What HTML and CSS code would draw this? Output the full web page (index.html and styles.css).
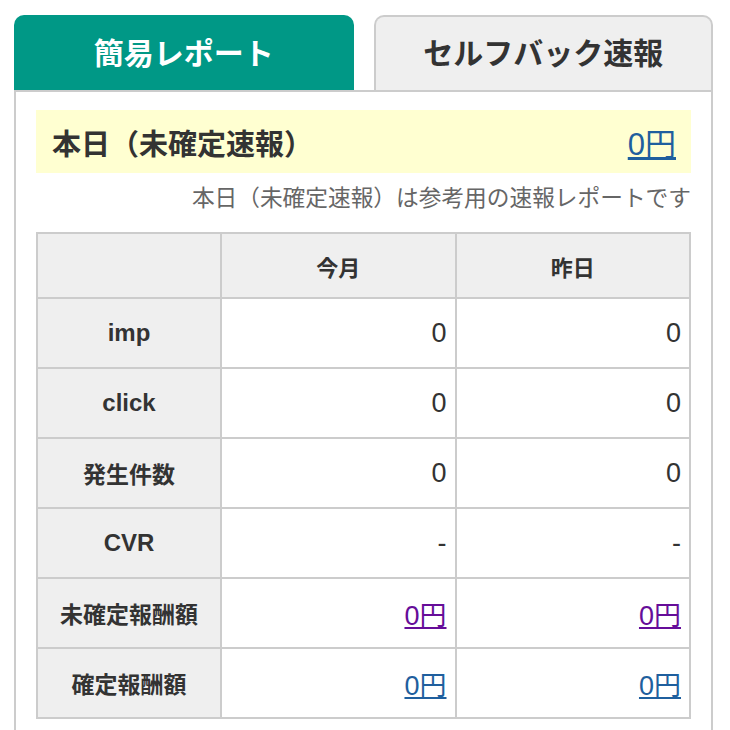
FILE: index.html
```html
<!DOCTYPE html>
<html lang="ja">
    <head>
        <meta charset="UTF-8">
        <meta name="viewport" content="width=device-width, initial-scale=1">
        <title> 簡易レポート </title>
        <link rel="stylesheet" href="styles.css">
    </head>
    <body>
        <div class="wrap">
            <div class="tabs">
                <a class="tab active" href="#">簡易レポート</a>
                <a class="tab" href="#">セルフバック速報</a>
            </div>
            <div class="panel">
                <div class="today">
                    <span class="today-label">本日（未確定速報）</span>
                    <a class="today-amount" href="#">0円</a>
                </div>
                <p class="note">本日（未確定速報）は参考用の速報レポートです</p>
                <table class="report">
                    <colgroup>
                        <col class="c-head">
                        <col class="c-val">
                        <col class="c-val">
                    </colgroup>
                    <thead>
                        <tr>
                            <th></th>
                            <th>今月</th>
                            <th>昨日</th>
                        </tr>
                    </thead>
                    <tbody>
                        <tr>
                            <th class="en">imp</th>
                            <td>0</td>
                            <td>0</td>
                        </tr>
                        <tr>
                            <th class="en">click</th>
                            <td>0</td>
                            <td>0</td>
                        </tr>
                        <tr>
                            <th>発生件数</th>
                            <td>0</td>
                            <td>0</td>
                        </tr>
                        <tr>
                            <th class="en">CVR</th>
                            <td>-</td>
                            <td>-</td>
                        </tr>
                        <tr>
                            <th>未確定報酬額</th>
                            <td><a class="visited" href="#">0円</a></td>
                            <td><a class="visited" href="#">0円</a></td>
                        </tr>
                        <tr>
                            <th>確定報酬額</th>
                            <td><a href="#">0円</a></td>
                            <td><a href="#">0円</a></td>
                        </tr>
                    </tbody>
                </table>
            </div>
        </div>
    </body>
</html>
```

FILE: styles.css
```css
body {
    margin: 0;
    background-color: #fff;
    color: #333;
    font-family: "Liberation Sans", "Noto Sans CJK JP", sans-serif;
}
a {
    color: #1f5f9e;
}
.wrap {
    margin: 15px 17px 0 14px;
}
.tabs {
    display: flex;
    gap: 20px;
}
.tab {
    flex: 1;
    height: 75px;
    display: flex;
    align-items: center;
    justify-content: center;
    border-radius: 10px 10px 0 0;
    font-family: "Noto Sans CJK JP", sans-serif;
    font-size: 30px;
    font-weight: bold;
    text-decoration: none;
    color: #333;
    background-color: #efefef;
    border: 2px solid #ccc;
    border-bottom: none;
    box-sizing: border-box;
    padding-bottom: 5px;
}
.tab.active {
    color: #fff;
    background-color: #009886;
    border-color: #009886;
}
.panel {
    border: 2px solid #ccc;
    padding: 18px 20px 30px;
}
.today {
    height: 63px;
    display: flex;
    align-items: center;
    justify-content: space-between;
    padding: 0 15px 0 16px;
    background-color: #ffffd1;
}
.today-label {
    font-family: "Noto Sans CJK JP", sans-serif;
    font-size: 29px;
    font-weight: bold;
}
.today-amount {
    font-size: 31px;
}
.note {
    margin: 7px 0 19px;
    text-align: right;
    font-size: 22.7px;
    color: #666;
    font-family: "Noto Sans CJK JP", sans-serif;
}
.report {
    width: 100%;
    table-layout: fixed;
    border-collapse: collapse;
}
.report .c-head {
    width: 184px;
}
.report th,
.report td {
    border: 2px solid #ccc;
    height: 68px;
    padding: 0 8px;
}
.report thead th {
    height: 63px;
    font-family: "Noto Sans CJK JP", sans-serif;
    font-size: 22px;
}
.report th {
    background-color: #efefef;
    font-family: "Noto Sans CJK JP", sans-serif;
    font-size: 23px;
    text-align: center;
}
.report th.en {
    font-family: "Liberation Sans", sans-serif;
    font-size: 24px;
}
.report td {
    text-align: right;
    font-size: 27px;
}
.report td a.visited {
    color: #660d99;
}
```
